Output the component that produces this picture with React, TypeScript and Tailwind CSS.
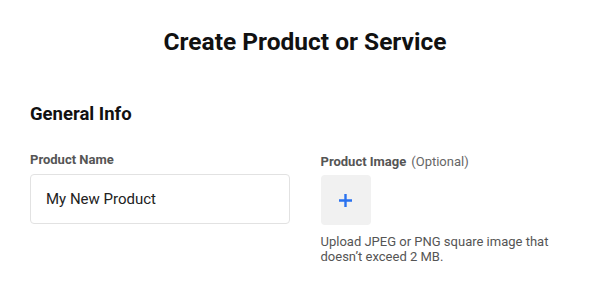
import React from 'react';

export default function App() {
  return (
    <div className="w-[610px] h-[291px] bg-white font-['Roboto',sans-serif] overflow-hidden">
      <h1 className="pt-[27px] text-center text-[24.5px] leading-[30px] font-bold text-[#111]">
        Create Product or Service
      </h1>

      <div className="px-[30px] pt-[45px]">
        <h2 className="text-[18.5px] leading-[24px] font-bold text-[#111]">General Info</h2>

        <div className="grid grid-cols-2 gap-[31px] pt-[26px]">
          <div>
            <label className="block text-[13px] leading-[16px] font-bold text-[#555]">Product Name</label>
            <input
              defaultValue="My New Product"
              className="mt-[6px] w-[260px] h-[50px] px-[15px] border border-[#e2e2e2] rounded-[4px] text-[15px] text-[#222] outline-none"
            />
          </div>

          <div>
            <div className="flex items-baseline gap-[5px] pt-[2px]">
              <span className="text-[13px] leading-[16px] font-bold text-[#555]">Product Image</span>
              <span className="text-[13px] leading-[16px] text-[#666]">(Optional)</span>
            </div>
            <button className="mt-[5px] w-[50px] h-[50px] rounded-[4px] bg-[#f1f1f1] flex items-center justify-center">
              <svg width="13" height="13" viewBox="0 0 13 13">
                <path d="M6.5 0v13M0 6.5h13" stroke="#2a72ef" strokeWidth="2.4" />
              </svg>
            </button>
            <p className="mt-[9px] text-[13px] leading-[15px] text-[#555] max-w-[245px]">
              Upload JPEG or PNG square image that doesn’t exceed 2 MB.
            </p>
          </div>
        </div>
      </div>
    </div>
  );
}
